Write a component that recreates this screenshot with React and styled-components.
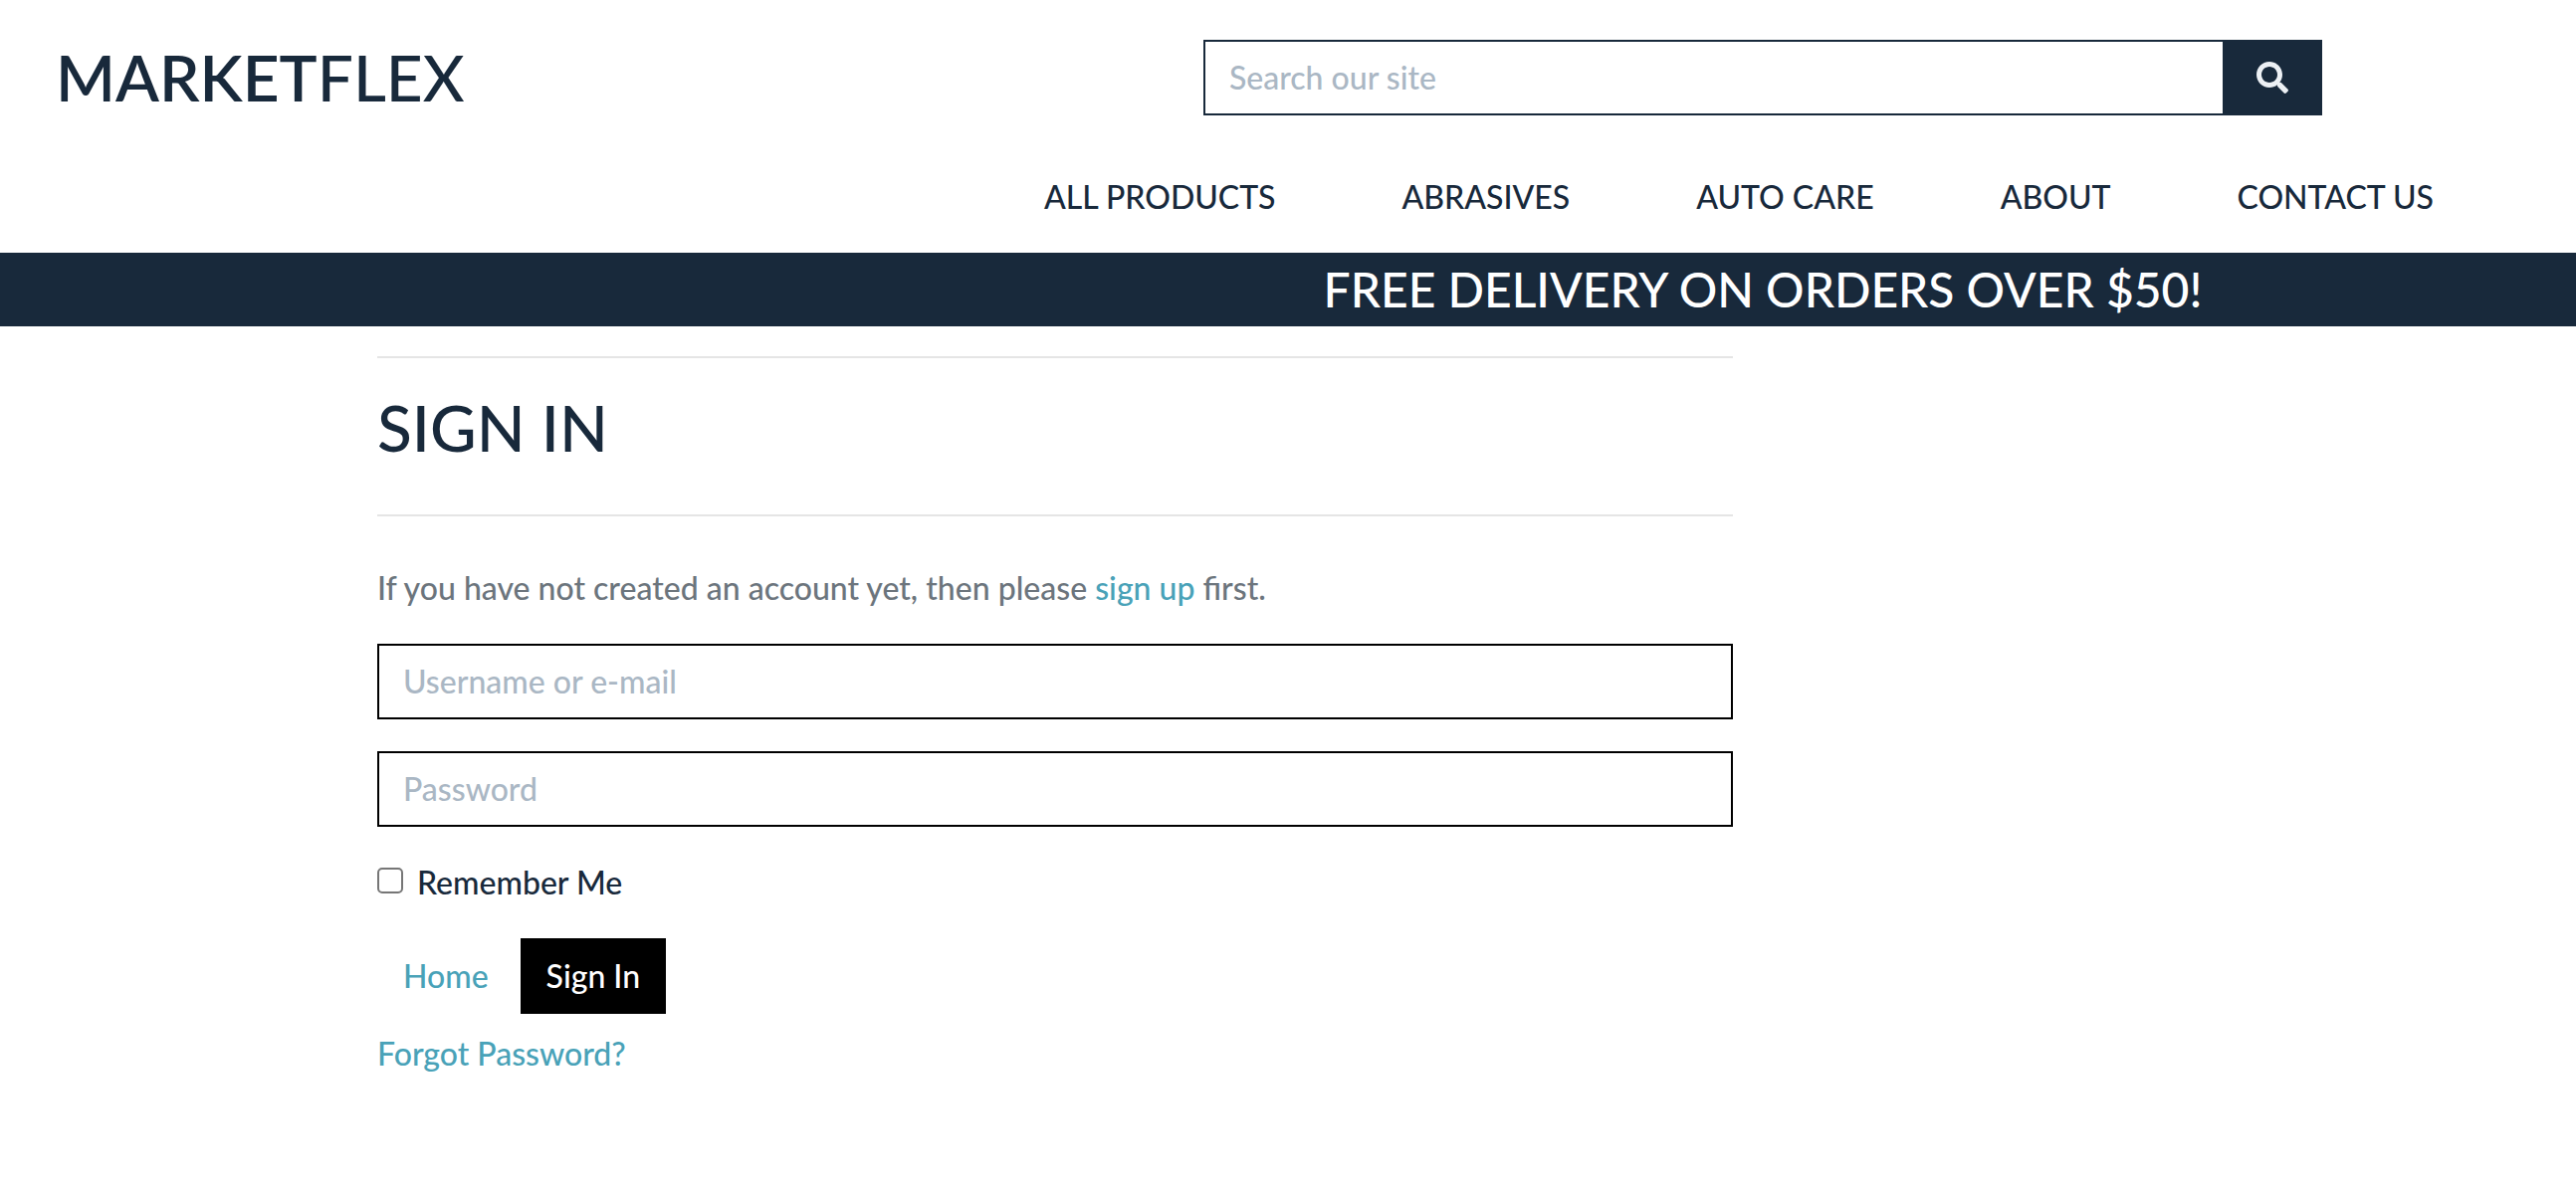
import React from "react";
import styled, { createGlobalStyle } from "styled-components";
import { FaSearch } from "react-icons/fa";

const navy = "#18293b";
const teal = "#49a2b8";

const GlobalStyle = createGlobalStyle`
  *, *::before, *::after { box-sizing: border-box; }
  body {
    margin: 0;
    background: #fff;
    color: ${navy};
    font-family: Lato, "Liberation Sans", sans-serif;
    font-size: 32px;
    font-weight: 500;
    line-height: 48px;
  }
  a { color: ${teal}; text-decoration: none; }
`;

const Header = styled.header`
  display: grid;
  grid-template-columns: minmax(0, 954fr) minmax(0, 1634fr);
  padding-top: 40px;
`;

const Brand = styled.a`
  padding-left: 56px;
  font-size: 64px;
  line-height: 76px;
  && { color: ${navy}; }
`;

const BrandStrong = styled.span`
  font-weight: 600;
`;

const HeaderMain = styled.div`
  display: flex;
  flex-direction: column;
  align-items: center;
  gap: 58px;
`;

const SearchForm = styled.form`
  display: flex;
  width: 68.8%;
  height: 76px;
`;

const TextInput = styled.input`
  display: block;
  width: 100%;
  min-width: 0;
  height: 76px;
  padding: 10px 24px 12px;
  border: 2px solid ${(p) => p.$line || "#000"};
  border-right-width: ${(p) => (p.$joined ? 0 : 2)}px;
  border-radius: 0;
  background: #fff;
  color: ${navy};
  font: inherit;
  &::placeholder { color: #aab7c4; opacity: 1; }
`;

const SearchButton = styled.button`
  display: flex;
  flex: 0 0 100px;
  align-items: center;
  justify-content: center;
  padding: 0;
  border: 0;
  background: ${navy};
  color: #ecf0f4;
  font-size: 32px;
`;

const Nav = styled.nav`
  display: flex;
  align-self: stretch;
  justify-content: center;
  gap: 127px;
  padding: 0 48px 32px 0;
  white-space: nowrap;
  a { color: ${navy}; }
`;

const Banner = styled.div`
  display: grid;
  grid-template-columns: minmax(0, 954fr) minmax(0, 1634fr);
  background: ${navy};
  color: #fff;
`;

const BannerText = styled.h2`
  grid-column: 2;
  margin: 0;
  padding: 8px 0;
  font-size: 48px;
  font-weight: 500;
  line-height: 58px;
  text-align: center;
  white-space: nowrap;
`;

const Page = styled.main`
  display: grid;
  grid-template-columns: minmax(0, 379fr) minmax(0, 1362fr) minmax(0, 847fr);
  padding-top: 30px;
`;

const Content = styled.div`
  grid-column: 2;
`;

const Rule = styled.hr`
  height: 2px;
  margin: 0;
  border: 0;
  background: #e5e5e5;
`;

const Title = styled.h1`
  margin: 32px 0 50px;
  font-size: 64px;
  font-weight: 500;
  line-height: 75px;
`;

const Intro = styled.p`
  margin: 48px 0 32px;
  color: #6c757d;
`;

const LoginForm = styled.form`
  display: flex;
  flex-direction: column;
  gap: 32px;
`;

const Remember = styled.label`
  display: flex;
  align-items: center;
  gap: 14px;
`;

const Checkbox = styled.input`
  appearance: none;
  width: 26px;
  height: 26px;
  margin: 0 0 4px;
  border: 2px solid #767676;
  border-radius: 5px;
  background: #fff;
  &:checked { background: ${teal}; }
`;

const Actions = styled.div`
  display: flex;
  gap: 6px;
`;

const HomeLink = styled.a`
  padding: 14px 26px;
`;

const SubmitButton = styled.button`
  padding: 14px 26px;
  border: 0;
  background: #000;
  color: #fff;
  font: inherit;
`;

const Forgot = styled.p`
  margin: 16px 0 0;
`;

const links = ["ALL PRODUCTS", "ABRASIVES", "AUTO CARE", "ABOUT", "CONTACT US"];

export default function App() {
  return (
    <>
      <GlobalStyle />
      <Header>
        <Brand href="#"><BrandStrong>MARKET</BrandStrong>FLEX</Brand>
        <HeaderMain>
          <SearchForm role="search" onSubmit={(e) => e.preventDefault()}>
            <TextInput $line={navy} $joined type="text" aria-label="Search our site" placeholder="Search our site" />
            <SearchButton type="submit" aria-label="Search"><FaSearch /></SearchButton>
          </SearchForm>
          <Nav>
            {links.map((label) => <a href="#" key={label}>{label}</a>)}
          </Nav>
        </HeaderMain>
      </Header>
      <Banner><BannerText>FREE DELIVERY ON ORDERS OVER $50!</BannerText></Banner>
      <Page>
        <Content>
          <Rule />
          <Title>SIGN IN</Title>
          <Rule />
          <Intro>
            If you have not created an account yet, then please <a href="#">sign up</a> first.
          </Intro>
          <LoginForm onSubmit={(e) => e.preventDefault()}>
            <TextInput type="text" aria-label="Username or e-mail" placeholder="Username or e-mail" />
            <TextInput type="password" aria-label="Password" placeholder="Password" />
            <Remember><Checkbox type="checkbox" />Remember Me</Remember>
            <Actions>
              <HomeLink href="#">Home</HomeLink>
              <SubmitButton type="submit">Sign In</SubmitButton>
            </Actions>
          </LoginForm>
          <Forgot><a href="#">Forgot Password?</a></Forgot>
        </Content>
      </Page>
    </>
  );
}
